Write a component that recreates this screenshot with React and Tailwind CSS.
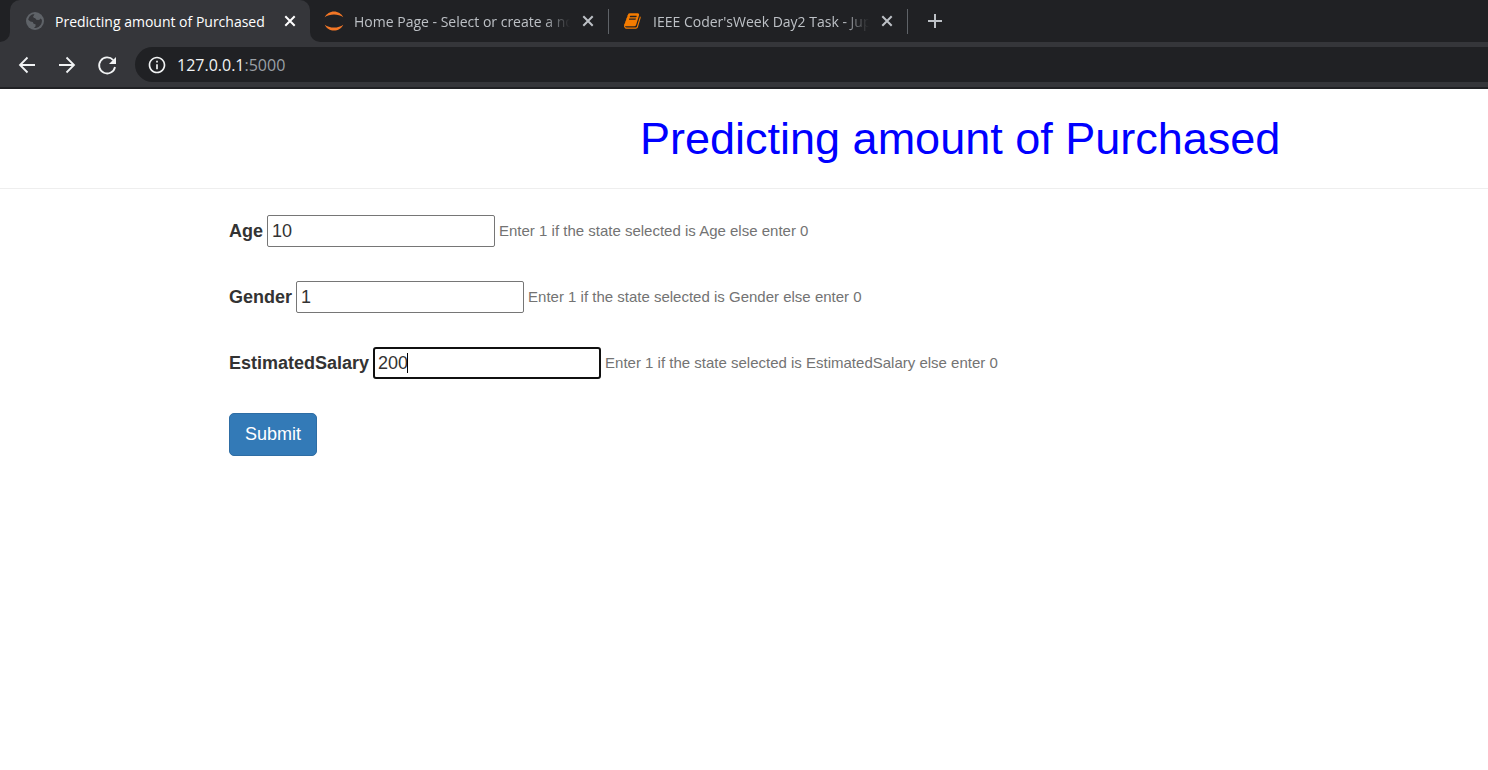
import { useState } from "react";
import { MdInfoOutline } from "react-icons/md";

function GlobeIcon() {
  return (
    <svg viewBox="0 0 20 20" className="h-5 w-5 shrink-0" aria-hidden="true">
      <circle cx="10" cy="10" r="9" fill="#5f6368" />
      <path
        d="M3.200 8.800C3.600 6.200 5.400 4.100 7.800 3.300L9.500 3.200 8.300 5.200 8.700 6.600 10.800 7.400 11.600 8.800 14.200 8.900 15.400 7.600 16.900 8.700C17.400 12.700 14.800 16.200 11 16.900L9 16.900 10.600 15.200 10.500 13.300 8.600 12.700 7.800 10.900 5.400 10.500z"
        fill="#35363a"
      />
      <path d="M8.300 5.200l3.200-.4 2.300 1.200-.3 2-1.900.8-.8-1.400-2.100-.8z" fill="#5f6368" />
    </svg>
  );
}

function JupyterIcon() {
  return (
    <svg viewBox="0 0 20 20" className="h-5 w-5 shrink-0" fill="#f37726" aria-hidden="true">
      <path d="M.7 6.300C2.500 2.700 6 .5 10 .5s7.500 2.200 9.300 5.800C16.800 4.400 13.500 3.500 10 3.500S3.200 4.400.7 6.300z" />
      <path d="M.7 13.700C2.500 17.300 6 19.500 10 19.500s7.500-2.200 9.300-5.800c-2.500 1.900-5.800 2.800-9.300 2.800s-6.800-.9-9.300-2.800z" />
    </svg>
  );
}

function BookIcon() {
  return (
    <svg viewBox="0 0 1792 1792" className="h-[18px] w-5 shrink-0" fill="#f57c00" aria-hidden="true">
      <path d="M1639 478q40 57 18 129l-275 906q-19 64-76.500 107.500t-122.500 43.500h-923q-77 0-148.500-53.500t-99.500-131.500q-24-67-2-127 0-4 3-27t4-37q1-8-3-21.500t-3-19.500q2-11 8-21t16.500-23.500 16.500-23.500q23-38 45-91.500t30-91.500q3-10 .5-30t-.5-28q3-11 17-28t17-23q21-36 42-92t25-90q1-9-2.500-32t.5-28q4-13 22-30.500t22-22.500q19-26 42.500-84.500t27.500-96.500q1-8-3-25.500t-2-26.500q2-8 9-18t18-23 17-21q8-12 16.500-30.500t15-35 16-36 19.500-32 26.500-23.500 36-11.500 47.500 5.500l-1 3q38-9 51-9h761q74 0 114 56t18 130l-274 906q-36 119-71.500 153.500t-128.500 34.500h-869q-27 0-38 15-11 16-1 43 24 70 144 70h923q29 0 56-15.500t35-41.500l300-987q7-22 5-57 38 15 59 43zm-1064 2q-4 13 2 22.500t20 9.500h608q13 0 25.500-9.500t16.500-22.500l21-64q4-13-2-22.500t-20-9.500h-608q-13 0-25.500 9.500t-16.500 22.500zm-83 256q-4 13 2 22.500t20 9.500h608q13 0 25.500-9.500t16.500-22.500l21-64q4-13-2-22.500t-20-9.500h-608q-13 0-25.500 9.500t-16.500 22.500z" />
    </svg>
  );
}

function LineIcon({ d }) {
  return (
    <svg
      viewBox="0 0 24 24"
      className="h-6 w-6"
      fill="none"
      stroke="currentColor"
      strokeWidth="1.8"
      aria-hidden="true"
    >
      <path d={d} />
    </svg>
  );
}

function ReloadIcon() {
  return (
    <svg viewBox="0 0 24 24" className="h-6 w-6" aria-hidden="true">
      <path
        d="M18.200 7.200A8 8 0 1 0 20 14"
        fill="none"
        stroke="currentColor"
        strokeWidth="1.8"
      />
      <path d="M21 4v7h-7z" fill="currentColor" />
    </svg>
  );
}

function CloseButton({ label }) {
  return (
    <button type="button" aria-label={label} className="flex h-4 w-4 shrink-0 items-center justify-center">
      <svg viewBox="0 0 16 16" className="h-4 w-4" stroke="currentColor" strokeWidth="2" aria-hidden="true">
        <path d="M3.300 3.300l9.400 9.400M12.700 3.300l-9.400 9.400" />
      </svg>
    </button>
  );
}

function ActiveTab() {
  return (
    <div className="relative flex h-full w-[300px] items-center gap-[10px] rounded-t-[10px] bg-[#35363a] pl-[15px] pr-3 text-white">
      <GlobeIcon />
      <span className="flex-1 whitespace-nowrap">Predicting amount of Purchased</span>
      <CloseButton label="Close Predicting amount of Purchased" />
      <span className="absolute -left-[10px] bottom-0 h-[10px] w-[10px] bg-[#35363a]">
        <span className="block h-full w-full rounded-br-[10px] bg-[#202124]" />
      </span>
      <span className="absolute -right-[10px] bottom-0 h-[10px] w-[10px] bg-[#35363a]">
        <span className="block h-full w-full rounded-bl-[10px] bg-[#202124]" />
      </span>
    </div>
  );
}

function Tab({ icon, title }) {
  return (
    <div className="flex h-full w-[299px] items-center gap-[10px] pl-[14px] text-[#bdc1c6]">
      {icon}
      <span className="flex-1 overflow-hidden whitespace-nowrap [mask-image:linear-gradient(to_right,black_88%,transparent)]">
        {title}
      </span>
      <CloseButton label={`Close ${title}`} />
      <span className="ml-[2px] h-[25px] w-px bg-[#5f6368]" />
    </div>
  );
}

function BrowserBar() {
  return (
    <header className="border-b-2 border-[#202124] bg-[#35363a] font-['Open_Sans',sans-serif]">
      <div className="flex h-[42px] items-center overflow-hidden bg-[#202124] pl-[10px] text-[14px]">
        <ActiveTab />
        <Tab icon={<JupyterIcon />} title="Home Page - Select or create a notebook" />
        <Tab icon={<BookIcon />} title="IEEE Coder'sWeek Day2 Task - Jupyter Notebook" />
        <button type="button" aria-label="New tab" className="ml-[15px] text-[#bdc1c6]">
          <svg viewBox="0 0 24 24" className="h-6 w-6" stroke="currentColor" strokeWidth="2" aria-hidden="true">
            <path d="M12 5v14M5 12h14" />
          </svg>
        </button>
      </div>
      <nav className="flex h-[45px] items-center gap-4 pl-[15px] text-[#f1f3f4]">
        <button type="button" aria-label="Back">
          <LineIcon d="M20 12H5M12.500 4.500L5 12l7.500 7.500" />
        </button>
        <button type="button" aria-label="Forward">
          <LineIcon d="M4 12h15M11.500 4.500L19 12l-7.500 7.500" />
        </button>
        <button type="button" aria-label="Reload">
          <ReloadIcon />
        </button>
        <div className="flex h-[35px] flex-1 items-center gap-[10px] rounded-l-full bg-[#202124] pl-3 text-[16px]">
          <MdInfoOutline className="h-5 w-5" aria-hidden="true" />
          <span>
            127.0.0.1<span className="text-[#9aa0a6]">:5000</span>
          </span>
        </div>
      </nav>
    </header>
  );
}

const fields = [
  { id: "Age", initial: "10" },
  { id: "Gender", initial: "1" },
  { id: "EstimatedSalary", initial: "200", active: true },
];

function Field({ id, initial, active }) {
  const [value, setValue] = useState(initial);
  return (
    <div className="flex items-center gap-1">
      <label htmlFor={id} className="font-bold">
        {id}
      </label>
      <span className="relative flex">
        <input
          id={id}
          name={id}
          type="text"
          value={value}
          onChange={(e) => setValue(e.target.value)}
          className={
            active
              ? "h-8 w-[228px] rounded-[3px] border-2 border-[#101010] bg-white px-[3px] caret-transparent outline-none"
              : "h-8 w-[228px] rounded-[2px] border border-[#767676] bg-white px-1"
          }
        />
        {active && <span className="absolute left-[34px] top-[6px] h-5 w-px bg-black" />}
      </span>
      <small className="text-[15px] text-[#737373]">
        Enter 1 if the state selected is {id} else enter 0
      </small>
    </div>
  );
}

export default function App() {
  return (
    <div className="min-h-screen bg-white font-['Liberation_Sans',Arial,sans-serif] text-[#333333]">
      <BrowserBar />
      <main>
        <h1 className="border-b border-[#eeeeee] pb-[25px] pl-[640px] pt-[25px] text-[45px] leading-[49px] whitespace-nowrap text-[#0000ff]">
          Predicting amount of Purchased
        </h1>
        <form
          className="flex flex-col items-start gap-[34px] pl-[229px] pt-[26px] text-[18px]"
          onSubmit={(e) => e.preventDefault()}
        >
          {fields.map((field) => (
            <Field key={field.id} {...field} />
          ))}
          <button
            type="submit"
            className="h-[43px] rounded-[5px] border border-[#2e6da4] bg-[#337ab7] px-[15px] text-white"
          >
            Submit
          </button>
        </form>
      </main>
    </div>
  );
}
